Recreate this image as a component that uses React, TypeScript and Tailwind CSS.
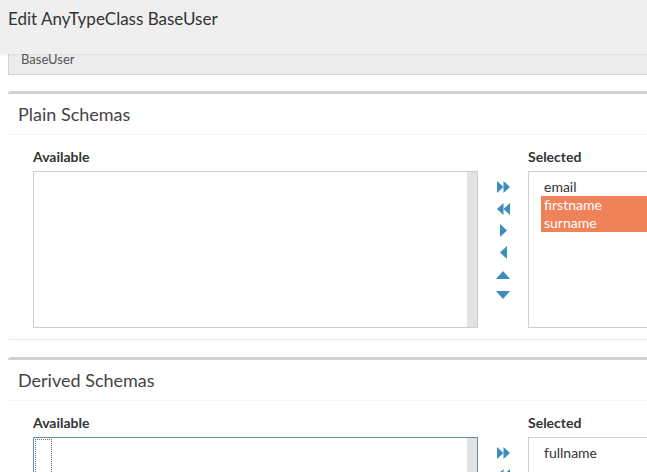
import React from "react";

const font = { fontFamily: "Lato, 'Open Sans', sans-serif" };

function Arrows({ compact }: { compact?: boolean }) {
  const c = "#3c8dbc";
  return (
    <div className="flex w-[50px] flex-col items-center pt-[33px]">
      {/* move all right */}
      <svg width="13" height="12" viewBox="0 0 13 12" className="mb-[10px]">
        <polygon points="0,0 6.5,6 0,12" fill={c} />
        <polygon points="6.5,0 13,6 6.5,12" fill={c} />
      </svg>
      {!compact && (
        <>
          <svg width="13" height="12" viewBox="0 0 13 12" className="mb-[9px]">
            <polygon points="13,0 6.5,6 13,12" fill={c} />
            <polygon points="6.5,0 0,6 6.5,12" fill={c} />
          </svg>
          <svg width="7" height="13" viewBox="0 0 7 13" className="mb-[9px]">
            <polygon points="0,0 7,6.5 0,13" fill={c} />
          </svg>
          <svg width="7" height="13" viewBox="0 0 7 13" className="mb-[12px]">
            <polygon points="7,0 0,6.5 7,13" fill={c} />
          </svg>
          <svg width="14" height="8" viewBox="0 0 14 8" className="mb-[12px]">
            <polygon points="0,8 7,0 14,8" fill={c} />
          </svg>
          <svg width="14" height="8" viewBox="0 0 14 8">
            <polygon points="0,0 14,0 7,8" fill={c} />
          </svg>
        </>
      )}
    </div>
  );
}

function Panel({
  title,
  selected,
  highlighted,
  focused,
}: {
  title: string;
  selected: string[];
  highlighted: string[];
  focused?: boolean;
}) {
  return (
    <div className="w-[720px] rounded-[3px] border-t-[3px] border-[#d2d2d2] bg-white shadow-[0_1px_1px_rgba(0,0,0,0.1)]">
      <div className="border-b border-[#f4f4f4] px-[10px] py-[10px] text-[18px] leading-[20px] text-[#444]">
        {title}
      </div>
      <div className="flex px-[25px] pb-[11px] pt-[13px]">
        <div className="w-[445px]">
          <div className="mb-[5px] text-[14px] font-bold leading-[18px] text-[#333]">Available</div>
          <div
            className={`relative flex h-[157px] border ${
              focused ? "border-[#5d8fa3]" : "border-[#cfcfcf]"
            }`}
          >
            <div className="flex-1 p-[1px]">
              {focused && <div className="h-full w-[17px] border border-dotted border-[#777]" />}
            </div>
            <div className="w-[10px] bg-[#e3e3e3]" />
          </div>
        </div>
        <Arrows compact={false} />
        <div className="flex-1">
          <div className="mb-[5px] text-[14px] font-bold leading-[18px] text-[#333]">Selected</div>
          <div className="h-[157px] border border-[#cfcfcf] pl-[12px] pt-[6px] text-[14px] leading-[18px]">
            {selected.map((s) => (
              <div
                key={s}
                className={`pl-[3px] ${
                  highlighted.includes(s) ? "bg-[#f0825a] text-white" : "text-[#333]"
                }`}
              >
                {s}
              </div>
            ))}
          </div>
        </div>
      </div>
    </div>
  );
}

export default function App() {
  return (
    <div className="h-[472px] w-[647px] overflow-hidden bg-white" style={font}>
      <div className="relative z-10 h-[54px] bg-[#efefef] pl-[8px] pt-[7px] text-[17px] leading-[24px] text-[#333] shadow-[0_1px_2px_rgba(0,0,0,0.06)]">
        Edit AnyTypeClass BaseUser
      </div>
      <div className="ml-[8px] -mt-[14px] w-[720px] border-b border-l border-[#d2d2d2] bg-[#ececec] pb-[8px] pl-[12px] pt-[12px] text-[13px] leading-[14px] text-[#555]">
        BaseUser
      </div>
      <div className="ml-[8px] mt-[16px] space-y-[18px]">
        <Panel
          title="Plain Schemas"
          selected={["email", "firstname", "surname"]}
          highlighted={["firstname", "surname"]}
        />
        <Panel title="Derived Schemas" selected={["fullname"]} highlighted={[]} focused />
      </div>
    </div>
  );
}
